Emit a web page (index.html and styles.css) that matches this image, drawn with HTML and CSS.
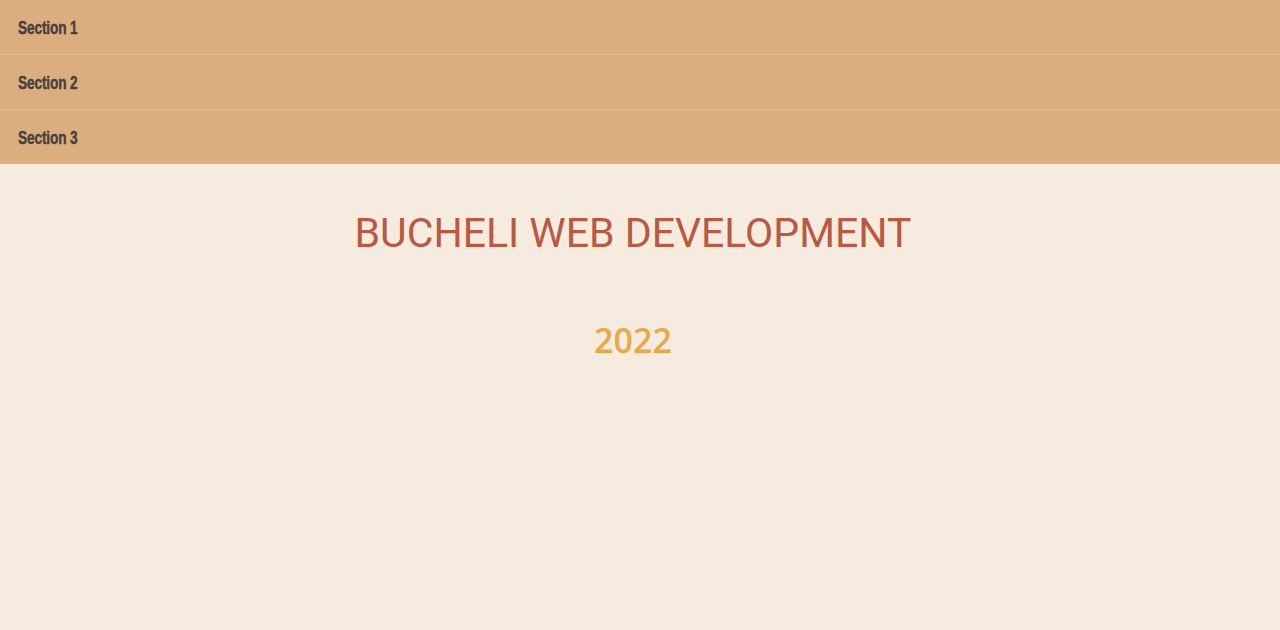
FILE: index.html
```html
<!DOCTYPE html>
<html>
<head>
<meta charset="utf-8">
<link rel="stylesheet" href="styles.css">
</head>
<body>
<nav class="menu">
  <div class="menu-item"><span class="menu-label">Section 1</span></div>
  <div class="menu-item"><span class="menu-label">Section 2</span></div>
  <div class="menu-item"><span class="menu-label">Section 3</span></div>
</nav>
<main class="hero">
  <h1 class="title">BUCHELI WEB DEVELOPMENT</h1>
  <h2 class="year">2022</h2>
</main>
</body>
</html>
```
FILE: styles.css
```css
html, body {
  margin: 0;
  padding: 0;
  background: #f5ecdf;
}
.menu {
  display: flex;
  flex-direction: column;
  background: #dbad7f;
}
.menu-item {
  height: 55px;
  box-sizing: border-box;
  display: flex;
  align-items: center;
  padding-left: 18px;
  padding-top: 2px;
  border-bottom: 1px solid #e3ba8f;
}
.menu-item:last-child {
  border-bottom: none;
  height: 54px;
}
.menu-label {
  font-family: "Liberation Sans", sans-serif;
  font-weight: bold;
  font-size: 19px;
  letter-spacing: -0.2px;
  color: #45413d;
  -webkit-text-stroke: 0.4px #45413d;
  display: inline-block;
  transform: scaleX(0.72);
  transform-origin: left center;
}
.hero {
  display: flex;
  flex-direction: column;
  align-items: center;
  padding-right: 14px;
}
.title {
  margin: 44px 0 0;
  font-family: Roboto, sans-serif;
  font-weight: 400;
  font-size: 41px;
  line-height: 50px;
  color: #bb5841;
}
.year {
  margin: 62px 0 0;
  font-family: "Open Sans", sans-serif;
  font-weight: 600;
  font-size: 34px;
  line-height: 40px;
  color: #eaa844;
}
```
